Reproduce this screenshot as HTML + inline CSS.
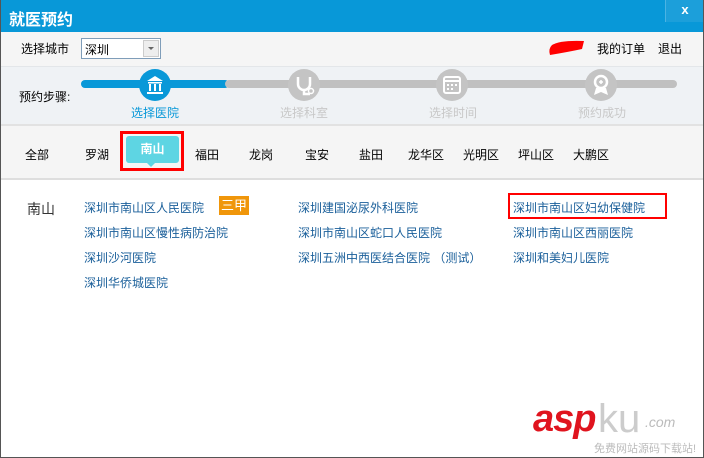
<!DOCTYPE html>
<html><head><meta charset="utf-8"><style>
*{margin:0;padding:0;box-sizing:border-box}
body{width:704px;height:458px;overflow:hidden;background:#fff;font-family:"Liberation Sans","Noto Sans CJK SC",sans-serif;font-size:12px;color:#000;position:relative}
.abs{position:absolute}
.win{position:absolute;left:0;top:0;width:704px;height:458px;border:1px solid #555;border-top:none}
.title{left:0;top:0;width:704px;height:32px;background:#0898d8;color:#fff;font-size:16px;font-weight:bold;padding:6px 0 0 9px}
.close{left:665px;top:0;width:39px;height:22px;background:#1c9fda;border-left:1px solid #4bb3e3;color:#fff;text-align:center;font-weight:bold;font-size:13px;line-height:20px}
.bar1{left:1px;top:32px;width:702px;height:34px;background:#f5f5f5}
.steps{left:1px;top:66px;width:702px;height:58px;background:#eff2f5;border-top:1px solid #e3e6e9}
.tabs{left:1px;top:124px;width:702px;height:56px;background:#f5f5f5;border-top:2px solid #e2e2e2;border-bottom:2px solid #dedede}
.t{position:absolute;top:146px;font-size:12px}
.link{position:absolute;color:#1a5f9a;font-size:12px}
.sl{position:absolute;font-size:12px;text-align:center;width:80px}
</style></head><body>
<div class="abs title">就医预约</div>
<div class="abs close">x</div>
<div class="abs bar1"></div>
<div class="abs" style="left:21px;top:40px">选择城市</div>
<div class="abs" style="left:81px;top:38px;width:80px;height:21px;border:1px solid #7f9db9;background:#fff;padding:2px 0 0 3px">深圳</div>
<div class="abs" style="left:143px;top:40px;width:16px;height:17px;background:#eee;border:1px solid #ccc"></div>
<div class="abs" style="left:148px;top:47px;width:0;height:0;border-left:3px solid transparent;border-right:3px solid transparent;border-top:3px solid #666"></div>
<svg class="abs" style="left:548px;top:38px" width="38" height="18"><path d="M4 7 Q12 2 36 3 L34 11 Q20 14 2 17 Q0 11 4 7Z" fill="#f00"/></svg>
<div class="abs" style="left:597px;top:40px">我的订单</div>
<div class="abs" style="left:658px;top:40px">退出</div>
<div class="abs steps"></div>
<div class="abs" style="left:19px;top:88px">预约步骤:</div>
<div class="abs" style="left:81px;top:80px;width:148px;height:8px;background:#0898d8;border-radius:4px"></div>
<div class="abs" style="left:225px;top:80px;width:452px;height:8px;background:#c0c0c0;border-radius:4px"></div>
<svg class="abs" style="left:139px;top:69px" width="32" height="32"><circle cx="16" cy="16" r="16" fill="#0898d8"/><path d="M8 12 L16 7 L24 12Z M9 13h14v1.5H9Z M10 15h2v7h-2Z M15 15h2v7h-2Z M20 15h2v7h-2Z M8 23h16v2H8Z" fill="#fff"/></svg>
<svg class="abs" style="left:288px;top:69px" width="32" height="32"><circle cx="16" cy="16" r="16" fill="#c4c4c4"/><path d="M10 8 v7 a6 6 0 0 0 12 0 v-7 M16 21 v4 h6" stroke="#fff" stroke-width="2.5" fill="none"/><circle cx="23" cy="22" r="2.5" fill="none" stroke="#fff" stroke-width="1.5"/></svg>
<svg class="abs" style="left:436px;top:69px" width="32" height="32"><circle cx="16" cy="16" r="16" fill="#c4c4c4"/><rect x="8" y="8" width="16" height="16" rx="2" fill="none" stroke="#fff" stroke-width="2"/><path d="M8 12h16" stroke="#fff" stroke-width="2"/><path d="M11 15h2v2h-2Zm4 0h2v2h-2Zm4 0h2v2h-2Zm-8 4h2v2h-2Zm4 0h2v2h-2Z" fill="#fff"/></svg>
<svg class="abs" style="left:585px;top:69px" width="32" height="32"><circle cx="16" cy="16" r="16" fill="#c4c4c4"/><circle cx="16" cy="13" r="6" fill="none" stroke="#fff" stroke-width="2.5"/><path d="M14 13h4M16 11v4" stroke="#fff" stroke-width="1.5"/><path d="M11 19 L9 26 L16 23 L23 26 L21 19" fill="#fff"/></svg>
<div class="sl" style="left:115px;top:104px;color:#0898d8">选择医院</div>
<div class="sl" style="left:264px;top:104px;color:#c8c8c8">选择科室</div>
<div class="sl" style="left:413px;top:104px;color:#c8c8c8">选择时间</div>
<div class="sl" style="left:562px;top:104px;color:#c8c8c8">预约成功</div>
<div class="abs tabs"></div>
<div class="t" style="left:25px">全部</div>
<div class="t" style="left:85px">罗湖</div>
<div class="abs" style="left:120px;top:131px;width:64px;height:40px;border:3px solid #f00"></div>
<div class="abs" style="left:126px;top:136px;width:53px;height:27px;background:#5ed5e3;border-radius:3px;color:#fff;font-weight:bold;text-align:center;line-height:27px">南山</div>
<div class="abs" style="left:147px;top:163px;width:0;height:0;border-left:4px solid transparent;border-right:4px solid transparent;border-top:4px solid #5ed5e3"></div>
<div class="t" style="left:195px">福田</div>
<div class="t" style="left:249px">龙岗</div>
<div class="t" style="left:305px">宝安</div>
<div class="t" style="left:359px">盐田</div>
<div class="t" style="left:408px">龙华区</div>
<div class="t" style="left:463px">光明区</div>
<div class="t" style="left:518px">坪山区</div>
<div class="t" style="left:573px">大鹏区</div>
<div class="abs" style="left:27px;top:199px;font-size:14px;color:#333">南山</div>
<div class="link" style="left:84px;top:199px">深圳市南山区人民医院</div>
<div class="abs" style="left:219px;top:196px;width:30px;height:19px;background:#f0960a;color:#fff;text-align:center;line-height:19px;font-size:13px">三甲</div>
<div class="link" style="left:84px;top:224px">深圳市南山区慢性病防治院</div>
<div class="link" style="left:84px;top:249px">深圳沙河医院</div>
<div class="link" style="left:84px;top:274px">深圳华侨城医院</div>
<div class="link" style="left:298px;top:199px">深圳建国泌尿外科医院</div>
<div class="link" style="left:298px;top:224px">深圳市南山区蛇口人民医院</div>
<div class="link" style="left:298px;top:249px">深圳五洲中西医结合医院 （测试）</div>
<div class="abs" style="left:508px;top:193px;width:159px;height:26px;border:2px solid #f00"></div>
<div class="link" style="left:513px;top:199px">深圳市南山区妇幼保健院</div>
<div class="link" style="left:513px;top:224px">深圳市南山区西丽医院</div>
<div class="link" style="left:513px;top:249px">深圳和美妇儿医院</div>
<div class="abs" style="left:533px;top:398px;font:italic bold 38px 'Liberation Sans',sans-serif;color:#e0141e;letter-spacing:-1px">asp</div>
<div class="abs" style="left:598px;top:397px;font:40px 'Liberation Sans',sans-serif;color:#ccc">ku</div>
<div class="abs" style="left:645px;top:414px;font:italic 14px 'Liberation Sans',sans-serif;color:#bbb">.com</div>
<div class="abs" style="left:594px;top:440px;font-size:11px;color:#bbb;letter-spacing:0px">免费网站源码下载站!</div>
<div class="win"></div>
</body></html>
